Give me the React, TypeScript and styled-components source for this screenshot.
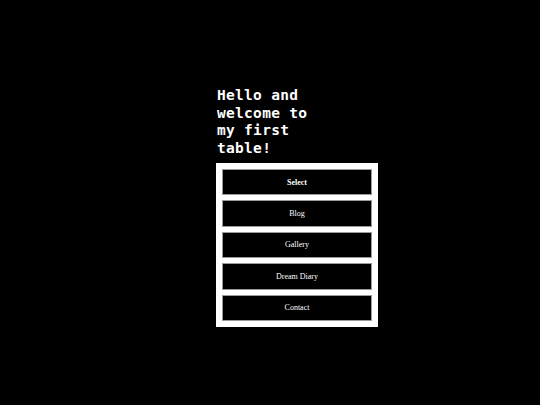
import React from 'react';
import styled, { createGlobalStyle } from 'styled-components';

const GlobalStyle = createGlobalStyle`
  html, body {
    margin: 0;
    padding: 0;
    background: #000;
  }
`;

const Page = styled.div`
  width: 540px;
  height: 405px;
  background: #000;
  display: flex;
  justify-content: center;
  padding-top: 87px;
  box-sizing: border-box;
`;

const Column = styled.div`
  width: 108px;
  display: flex;
  flex-direction: column;
  align-items: flex-start;
`;

const Heading = styled.h1`
  margin: 0 0 0 1px;
  font-family: 'DejaVu Sans Mono', monospace;
  font-weight: bold;
  font-size: 14.5px;
  line-height: 17.5px;
  letter-spacing: 0.3px;
  color: #fff;
`;

const MenuTable = styled.table`
  margin-top: 6px;
  width: 162px;
  flex-shrink: 0;
  background: #fff;
  border-collapse: separate;
  border-spacing: 5px;
  padding: 1px;
`;

const Cell = styled.td<{ $head?: boolean }>`
  height: 24.4px;
  padding: 0;
  background: #000;
  border: 1px solid #9a9a9a;
  color: #fff;
  text-align: center;
  vertical-align: middle;
  font-family: 'Liberation Serif', serif;
  font-size: 8px;
  font-weight: ${p => (p.$head ? 'bold' : 'normal')};
`;

const items = ['Blog', 'Gallery', 'Dream Diary', 'Contact'];

export default function App() {
  return (
    <>
      <GlobalStyle />
      <Page>
        <Column>
          <Heading>Hello and welcome to my first table!</Heading>
          <MenuTable>
            <tbody>
              <tr>
                <Cell as="th" $head>Select</Cell>
              </tr>
              {items.map(item => (
                <tr key={item}>
                  <Cell>{item}</Cell>
                </tr>
              ))}
            </tbody>
          </MenuTable>
        </Column>
      </Page>
    </>
  );
}
